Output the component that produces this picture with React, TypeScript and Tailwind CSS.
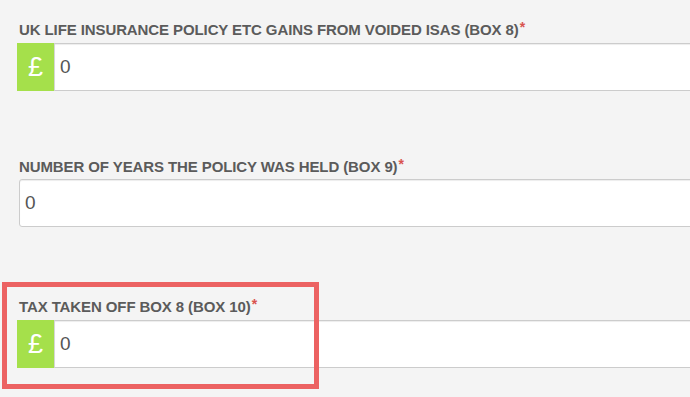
import React from "react";

function Label({ text }: { text: string }) {
  return (
    <label className="block h-4 text-[15px] leading-4 font-bold tracking-[-0.1px] text-[#5b5b5b] whitespace-nowrap">
      {text}
      <span className="text-[#d9534f] text-[14px] font-bold ml-[1px] relative -top-[3px]">*</span>
    </label>
  );
}

function MoneyInput() {
  return (
    <div className="flex w-[720px] h-[48px]">
      <span className="w-[37px] bg-[#a5e04b] flex items-center justify-center text-white text-[27px] leading-none">
        £
      </span>
      <div className="flex-1 flex items-center bg-white border border-[#cccccc] border-l-[#d6d6d6] pl-[5px] text-[19px] text-[#555] shadow-[inset_0_1px_1px_rgba(0,0,0,0.075)]">
        0
      </div>
    </div>
  );
}

export default function App() {
  return (
    <div
      className="relative w-[690px] h-[397px] overflow-hidden bg-[#f4f4f4]"
      style={{ fontFamily: '"Liberation Sans", Arial, sans-serif' }}
    >
      <div className="pl-[17px] pt-[22px]">
        {/* Box 8 */}
        <div className="pl-[2px]">
          <Label text="UK LIFE INSURANCE POLICY ETC GAINS FROM VOIDED ISAS (BOX 8)" />
        </div>
        <div className="mt-[5px]">
          <MoneyInput />
        </div>

        {/* Box 9 */}
        <div className="pl-[2px] mt-[68px]">
          <Label text="NUMBER OF YEARS THE POLICY WAS HELD (BOX 9)" />
          <div className="mt-[4px] w-[720px] h-[48px] flex items-center bg-white border border-[#cccccc] rounded-[3px] pl-[5px] text-[19px] text-[#555] shadow-[inset_0_1px_1px_rgba(0,0,0,0.075)]">
            0
          </div>
        </div>

        {/* Box 10 */}
        <div className="pl-[2px] mt-[72px]">
          <Label text="TAX TAKEN OFF BOX 8 (BOX 10)" />
        </div>
        <div className="mt-[5px]">
          <MoneyInput />
        </div>
      </div>

      {/* highlight annotation */}
      <div className="absolute left-[2px] top-[282px] w-[317px] h-[107px] border-[5px] border-[#ec6262] pointer-events-none" />
    </div>
  );
}
